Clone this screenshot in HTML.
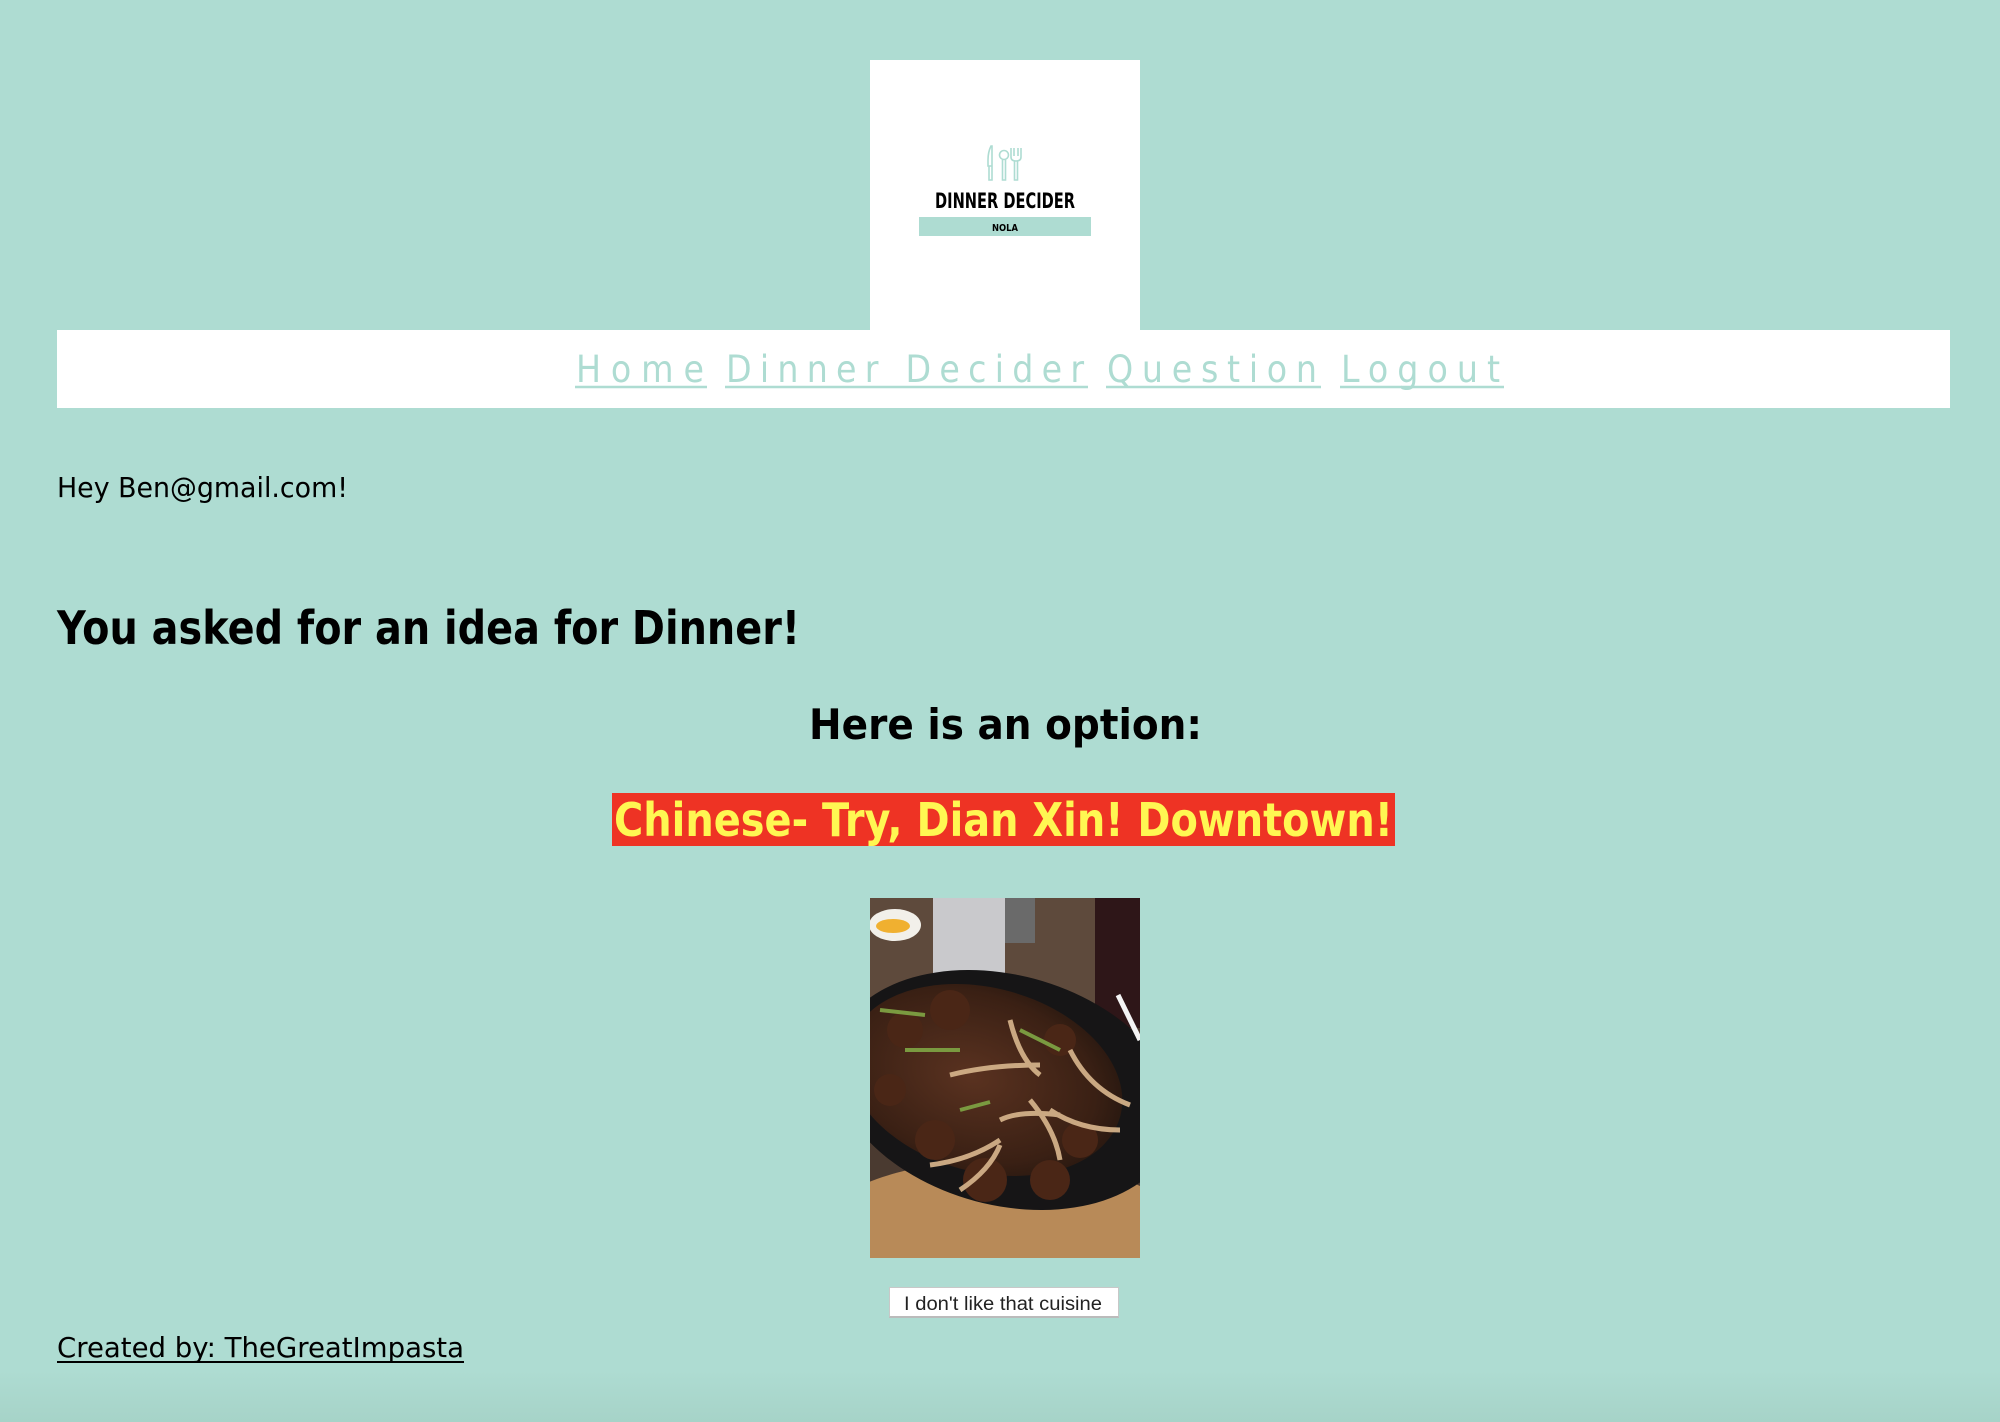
<!DOCTYPE html>
<html><head><meta charset="utf-8"><style>
html,body{margin:0;padding:0;}
body{width:2000px;height:1422px;background:linear-gradient(#aedcd2 0,#aedcd2 1370px,#a6d3c8 1422px);position:relative;overflow:hidden;font-family:"DejaVu Sans","Liberation Sans",sans-serif;}
.abs{position:absolute;}
</style></head><body>
<div class="abs" style="left:870px;top:60px;width:270px;height:272px;background:#fff"></div>
<div class="abs" style="left:57px;top:330px;width:1893px;height:78px;background:#fff"></div>
<div class="abs" style="left:919px;top:217px;width:172px;height:19px;background:#aedcd2"></div>
<div class="abs" style="left:889px;top:1287px;width:230px;height:31px;background:#fff;border:1px solid #c8c8c8;border-bottom:2px solid #bbb;box-sizing:border-box"></div>

<svg class="abs" style="left:0;top:0" width="2000" height="1422" xmlns="http://www.w3.org/2000/svg">
<g fill="none" stroke="#aedcd2" stroke-width="1.6">
<path d="M991 146 q-3 6 -3 14 v6 h4 v-20 z M989 166 v14 h3 v-14"/>
<circle cx="1004" cy="155" r="4.5"/><path d="M1002.5 160 v20 h3 v-20"/>
<path d="M1011 148 v9 q0 4 5 4 q5 0 5 -4 v-9 M1014 148 v8 M1018 148 v8 M1014.5 161 v19 h3 v-19"/>
</g>
<text x="1005" y="208" text-anchor="middle" font-family="DejaVu Sans" font-weight="bold" font-size="21" textLength="140" lengthAdjust="spacingAndGlyphs" fill="#000">DINNER DECIDER</text>
<text x="1005" y="231" text-anchor="middle" font-family="DejaVu Sans" font-weight="bold" font-size="10" textLength="26" lengthAdjust="spacingAndGlyphs" fill="#000">NOLA</text>

<g fill="#aedcd2" font-family="DejaVu Sans Condensed, DejaVu Sans" font-size="37">
<text x="576" y="382" textLength="128" lengthAdjust="spacing">Home</text>
<text x="726" y="382" textLength="358" lengthAdjust="spacing">Dinner Decider</text>
<text x="1107" y="382" textLength="210" lengthAdjust="spacing">Question</text>
<text x="1341" y="382" textLength="159" lengthAdjust="spacing">Logout</text>
</g>
<g stroke="#aedcd2" stroke-width="2.5">
<line x1="575" y1="387" x2="707" y2="387"/><line x1="725" y1="387" x2="1088" y2="387"/>
<line x1="1106" y1="387" x2="1321" y2="387"/><line x1="1340" y1="387" x2="1504" y2="387"/>
</g>

<text x="57" y="497" font-size="28" textLength="291" lengthAdjust="spacingAndGlyphs" fill="#000">Hey Ben@gmail.com!</text>
<text x="57" y="644" font-size="46" font-weight="bold" textLength="743" lengthAdjust="spacingAndGlyphs" fill="#000">You asked for an idea for Dinner!</text>
<text x="809" y="739" font-size="42" font-weight="bold" textLength="393" lengthAdjust="spacingAndGlyphs" fill="#000">Here is an option:</text>
<rect x="612" y="793" width="783" height="53" fill="#ee3324"/>
<text x="614" y="836" font-size="46" font-weight="bold" textLength="779" lengthAdjust="spacingAndGlyphs" fill="#fff752">Chinese- Try, Dian Xin! Downtown!</text>

<defs><clipPath id="c"><rect x="870" y="898" width="270" height="360"/></clipPath>
<radialGradient id="f" cx="0.45" cy="0.5" r="0.6"><stop offset="0" stop-color="#5a3220"/><stop offset="0.75" stop-color="#3a2014"/><stop offset="1" stop-color="#24160f"/></radialGradient></defs>
<g clip-path="url(#c)">
<rect x="870" y="898" width="270" height="360" fill="#4a3a30"/>
<rect x="870" y="898" width="270" height="110" fill="#5e4a3c"/>
<rect x="933" y="898" width="72" height="75" fill="#c9c9cc"/>
<rect x="1005" y="898" width="30" height="45" fill="#6a6a6a"/>
<path d="M1095 898 h45 v130 h-45 z" fill="#2e1618"/>
<ellipse cx="895" cy="925" rx="26" ry="16" fill="#f2f0ea"/><ellipse cx="893" cy="926" rx="17" ry="7" fill="#f0b030"/>
<ellipse cx="1000" cy="1235" rx="185" ry="75" fill="#b88a58"/>
<ellipse cx="1005" cy="1090" rx="175" ry="115" transform="rotate(15 1005 1090)" fill="#161516"/>
<ellipse cx="985" cy="1080" rx="140" ry="92" transform="rotate(15 985 1080)" fill="url(#f)"/>
<g fill="#4a2616">
<circle cx="905" cy="1030" r="18"/><circle cx="950" cy="1010" r="20"/><circle cx="890" cy="1090" r="16"/>
<circle cx="935" cy="1140" r="20"/><circle cx="985" cy="1180" r="22"/><circle cx="1050" cy="1180" r="20"/>
<circle cx="1080" cy="1140" r="18"/><circle cx="1060" cy="1040" r="16"/>
</g>
<g stroke="#d2b088" stroke-width="5" fill="none" opacity="0.95">
<path d="M950 1075 q40 -10 90 -10"/><path d="M1010 1020 q10 40 30 55"/><path d="M1070 1050 q20 40 60 55"/>
<path d="M930 1165 q40 -5 70 -25"/><path d="M1030 1100 q25 30 30 60"/><path d="M1000 1120 q20 -10 60 -5"/>
<path d="M1050 1110 q30 20 70 20"/><path d="M960 1190 q30 -20 40 -45"/>
</g>
<g stroke="#7a9a40" stroke-width="4"><path d="M880 1010 l45 5"/><path d="M905 1050 l55 0"/><path d="M1020 1030 l40 20"/><path d="M960 1110 l30 -8"/></g>
<path d="M1118 995 l22 45" stroke="#f4f4f4" stroke-width="5"/>
</g>

<text x="904" y="1310" font-family="Liberation Sans" font-size="19" textLength="198" lengthAdjust="spacingAndGlyphs" fill="#222">I don't like that cuisine</text>

<text x="57" y="1357" font-size="28" textLength="407" lengthAdjust="spacingAndGlyphs" fill="#000">Created by: TheGreatImpasta</text>
<line x1="57" y1="1362" x2="464" y2="1362" stroke="#000" stroke-width="2"/>
</svg>
</body></html>
